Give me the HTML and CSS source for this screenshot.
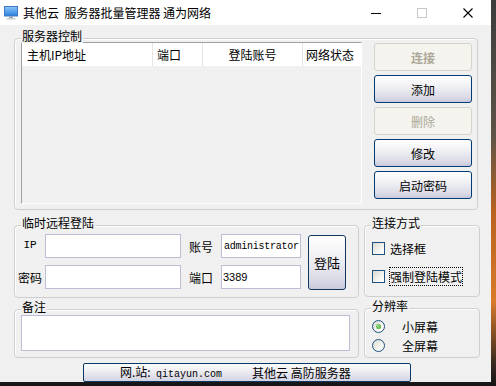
FILE: index.html
```html
<!DOCTYPE html>
<html lang="zh-CN">
<head>
    <meta charset="UTF-8">
    <meta name="viewport" content="width=device-width, initial-scale=1.0">
    <title>其他云 服务器批量管理器</title>
    <link rel="stylesheet" href="styles.css">
</head>
<body>
    <div class="window">
        <!-- Title bar -->
        <div class="titlebar">
            <svg class="app-icon" width="14" height="14" viewBox="0 0 14 14">
                <defs>
                    <linearGradient id="scr" x1="0" y1="0" x2="0" y2="1">
                        <stop offset="0" stop-color="#8cc8f8"/>
                        <stop offset="1" stop-color="#2a7ee0"/>
                    </linearGradient>
                </defs>
                <rect x="0.5" y="0.5" width="13" height="9.5" fill="url(#scr)" stroke="#3a78c0"/>
                <rect x="5" y="10.5" width="4" height="1.5" fill="#9aa4ae"/>
                <rect x="2.5" y="12" width="9" height="1.5" fill="#c8ced4"/>
            </svg>
            <span class="title">其他云&nbsp;&nbsp;服务器批量管理器 通为网络</span>
            <div class="caption">
                <span class="cap">
                    <svg width="10" height="10" viewBox="0 0 10 10"><path d="M0 5.5H10" stroke="#000" stroke-width="1"/></svg>
                </span>
                <span class="cap">
                    <svg width="10" height="10" viewBox="0 0 10 10"><rect x="0.5" y="0.5" width="9" height="9" fill="none" stroke="#c8c8c8"/></svg>
                </span>
                <span class="cap">
                    <svg width="10" height="10" viewBox="0 0 10 10"><path d="M0.5 0.5L9.5 9.5M9.5 0.5L0.5 9.5" stroke="#000" stroke-width="1.1"/></svg>
                </span>
            </div>
        </div>

        <div class="client">
            <!-- Server control -->
            <div class="group server-group">
                <span class="group-title">服务器控制</span>
                <div class="listview">
                    <div class="list-header">
                        <div class="col col-ip">主机IP地址</div>
                        <div class="col col-port">端口</div>
                        <div class="col col-user">登陆账号</div>
                        <div class="col col-state">网络状态</div>
                    </div>
                </div>
                <div class="side-buttons">
                    <button class="btn off strong">连接</button>
                    <button class="btn">添加</button>
                    <button class="btn off">删除</button>
                    <button class="btn">修改</button>
                    <button class="btn">启动密码</button>
                </div>
            </div>

            <div class="row row-login">
                <div class="group login-group">
                    <span class="group-title">临时远程登陆</span>
                    <div class="login-grid">
                        <span class="field-label mono">IP</span>
                        <input class="field" type="text">
                        <span class="field-label">账号</span>
                        <input class="field mono-input" type="text" value="administrator">
                        <button class="btn login-btn">登陆</button>
                        <span class="field-label">密码</span>
                        <input class="field" type="text">
                        <span class="field-label">端口</span>
                        <input class="field port-input" type="text" value="3389">
                    </div>
                </div>
                <div class="group mode-group">
                    <span class="group-title">连接方式</span>
                    <div class="check-row">
                        <span class="checkbox"></span>
                        <span>选择框</span>
                    </div>
                    <div class="check-row">
                        <span class="checkbox"></span>
                        <span class="focus">强制登陆模式</span>
                    </div>
                </div>
            </div>

            <div class="row row-notes">
                <div class="group notes-group">
                    <span class="group-title">备注</span>
                    <textarea class="notes"></textarea>
                </div>
                <div class="group res-group">
                    <span class="group-title">分辨率</span>
                    <div class="radio-row">
                        <span class="radio checked"></span>
                        <span>小屏幕</span>
                    </div>
                    <div class="radio-row">
                        <span class="radio"></span>
                        <span>全屏幕</span>
                    </div>
                </div>
            </div>

            <div class="site-bar">
                <span class="site">网.站:  <span class="url">qitayun.com</span></span>
                <span class="brand">其他云 高防服务器</span>
            </div>
        </div>
    </div>
</body>
</html>
```

FILE: styles.css
```css
/* General styling */
* {
    box-sizing: border-box;
}
html, body {
    margin: 0;
    padding: 0;
}
body {
    width: 496px;
    height: 386px;
    overflow: hidden;
    background: linear-gradient(to bottom, #3c3c3c 0%, #5e5448 35%, #b8621f 55%, #d87a2a 78%, #3a2a20 94%, #151515 100%);
    font-family: "Noto Sans CJK SC", sans-serif;
    font-size: 12px;
    color: #000;
}
.window {
    width: 491px;
    height: 382px;
    background: #f0f0f0;
}

/* Title bar */
.titlebar {
    height: 25px;
    background: #fff;
    display: flex;
    align-items: center;
}
.app-icon {
    margin-left: 4px;
    margin-right: 5px;
}
.title {
    font-size: 12px;
    line-height: 14px;
}
.caption {
    margin-left: auto;
    display: flex;
}
.cap {
    width: 46px;
    height: 25px;
    display: flex;
    align-items: center;
    justify-content: center;
}

/* Group boxes */
.client {
    padding: 13px 0 0 14px;
}
.group {
    position: relative;
    border: 1px solid #cfcfcf;
    border-radius: 4px;
    box-shadow: inset 1px 1px 0 #fff;
}
.group-title {
    position: absolute;
    top: -10px;
    left: 6px;
    padding: 0 1px;
    background: #f0f0f0;
    line-height: 14px;
}
.row {
    display: flex;
    gap: 5px;
}

/* Server control */
.server-group {
    width: 464px;
    height: 172px;
    padding: 3px 0 0 6px;
    display: flex;
    gap: 12px;
}
.listview {
    width: 341px;
    height: 162px;
    border: 1px solid;
    border-color: #a0a0a0 #fff #fff #a0a0a0;
}
.list-header {
    display: flex;
    height: 23px;
    background: #fff;
}
.col {
    line-height: 23px;
    border-right: 1px solid #e5e5e5;
    white-space: nowrap;
    overflow: hidden;
}
.col-ip { width: 131px; padding-left: 5px; }
.col-port { width: 50px; padding-left: 4px; }
.col-user { width: 100px; text-align: center; }
.col-state { flex: 1; padding-left: 3px; border-right: none; }

.side-buttons {
    display: flex;
    flex-direction: column;
    gap: 4px;
    padding-top: 1px;
}
.btn {
    width: 98px;
    height: 28px;
    padding: 0;
    font-family: "Noto Sans CJK SC", sans-serif;
    font-size: 12px;
    color: #000;
    border: 1px solid #003c74;
    border-radius: 3px;
    background: linear-gradient(to bottom, #ffffff 0%, #f2f2f6 35%, #dcdce8 80%, #c9c9da 100%);
}
.btn.off {
    color: #aca899;
    border-color: #d6d5cc;
    background: #f4f3ee;
}
.btn.strong {
    font-weight: bold;
}

/* Temporary login */
.row-login {
    margin-top: 15px;
    align-items: flex-start;
}
.login-group {
    width: 345px;
    height: 73px;
    padding-top: 8px;
}
.login-grid {
    display: grid;
    grid-template-columns: 30px 136px 40px 80px 38px;
    grid-template-rows: 24px 24px;
    row-gap: 7px;
    align-items: center;
}
.field-label {
    text-align: center;
    white-space: nowrap;
}
.field-label.mono {
    font-family: "Liberation Mono", monospace;
    font-size: 11px;
    margin-top: -3px;
}
.field {
    height: 24px;
    width: 100%;
    border: 1px solid #bdbdd6;
    background: #fff;
    padding: 0 2px;
    outline: none;
    font-family: "Liberation Sans", sans-serif;
    font-size: 11px;
}
.mono-input {
    font-family: "Liberation Mono", monospace;
    font-size: 10px;
    letter-spacing: -0.25px;
    padding: 0 0 0 2px;
}
.port-input {
    padding-left: 1px;
}
.login-btn {
    grid-column: 5;
    grid-row: 1 / 3;
    width: 38px;
    height: 55px;
    margin-left: 7px;
    margin-top: 1px;
    font-size: 13px;
    border-color: #10365e;
}

/* Connection mode */
.mode-group {
    width: 116px;
    height: 72px;
    padding: 16px 0 0 7px;
}
.check-row {
    display: flex;
    align-items: center;
    gap: 5px;
    height: 13px;
    margin-bottom: 15px;
}
.checkbox {
    width: 13px;
    height: 13px;
    border: 1px solid #1c5180;
    background: linear-gradient(135deg, #d9d9d2 0%, #f4f4f0 60%, #ffffff 100%);
}
.focus {
    outline: 1px dotted #000;
    outline-offset: 0;
}

/* Notes and resolution */
.row-notes {
    margin-top: 10px;
    align-items: flex-end;
}
.notes-group {
    width: 345px;
    height: 49px;
    padding: 5px 0 0 6px;
}
.notes {
    display: block;
    width: 329px;
    height: 36px;
    border: 1px solid #bdbdd6;
    background: #fff;
    resize: none;
    outline: none;
    margin: 0;
}
.res-group {
    width: 116px;
    height: 50px;
    padding: 11px 0 0 7px;
}
.radio-row {
    display: flex;
    align-items: center;
    gap: 17px;
    height: 12px;
    margin-bottom: 7px;
}
.radio {
    position: relative;
    width: 13px;
    height: 13px;
    border: 1px solid #1c5180;
    border-radius: 50%;
    background: linear-gradient(135deg, #d9d9d2 0%, #f4f4f0 60%, #ffffff 100%);
}
.radio.checked::after {
    content: "";
    position: absolute;
    left: 3px;
    top: 3px;
    width: 5px;
    height: 5px;
    border-radius: 50%;
    background: radial-gradient(circle at 40% 40%, #9de08a, #2f9a1e);
}

/* Footer bar */
.site-bar {
    width: 328px;
    height: 19px;
    margin: 5px 0 0 69px;
    border: 1px solid #0c3866;
    border-radius: 2px;
    background: linear-gradient(to bottom, #fdfdfd 0%, #ececf2 45%, #d4d4e2 100%);
    display: flex;
    align-items: center;
    padding-left: 36px;
    gap: 30px;
    white-space: pre;
    line-height: 17px;
}
.url {
    font-family: "Liberation Mono", monospace;
    font-size: 10px;
}
```
